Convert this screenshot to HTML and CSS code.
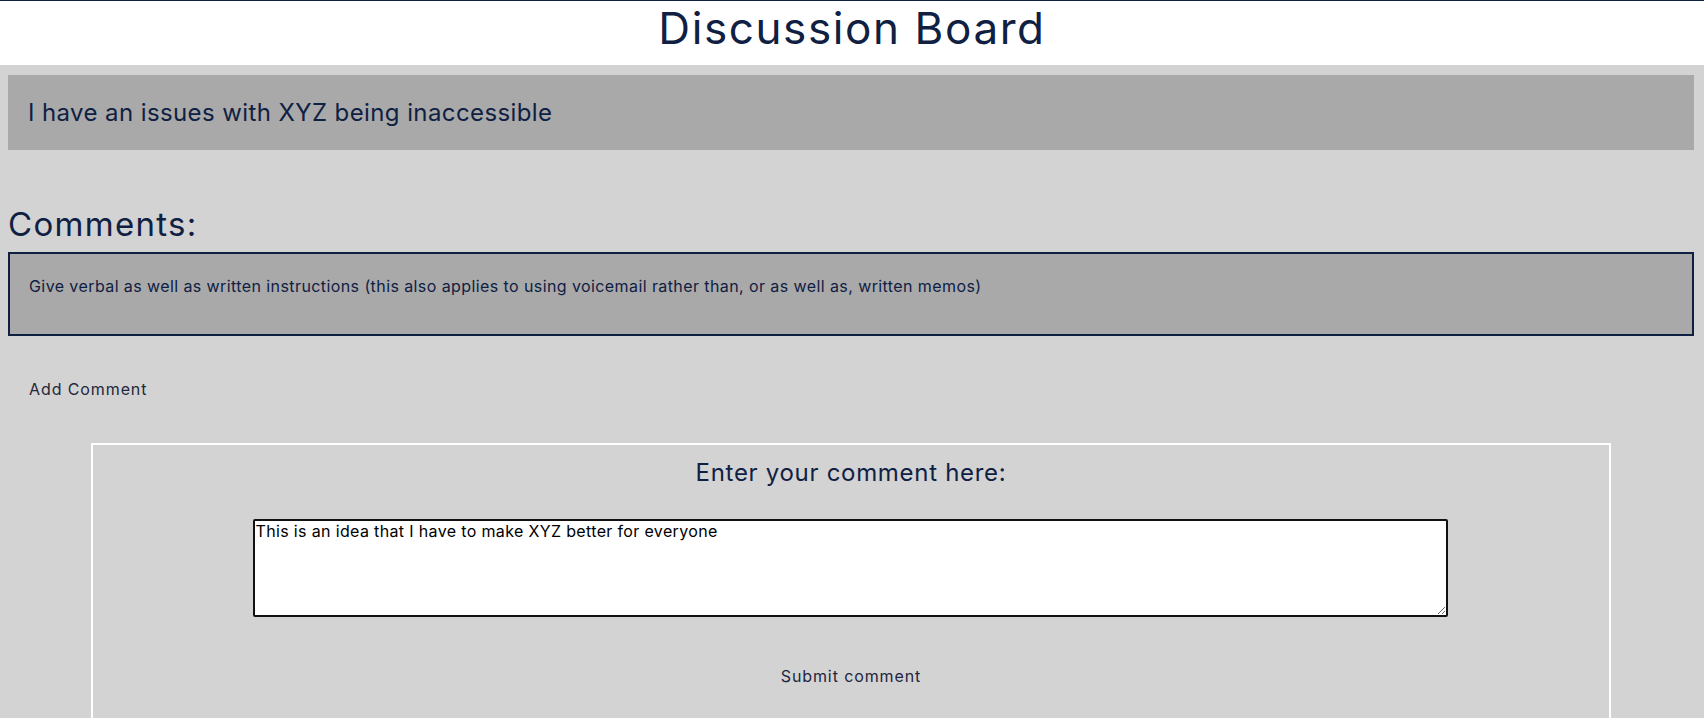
FILE: index.html
```html
<!DOCTYPE html>
<html lang="en">
<head>
<meta charset="utf-8">
<title>Discussion Board</title>
<link rel="stylesheet" href="styles.css">
</head>
<body>
<header class="site-header">
  <h1 class="site-title">Discussion Board</h1>
</header>
<main class="board">
  <section class="issue">I have an issues with XYZ being inaccessible</section>
  <h2 class="comments-title">Comments:</h2>
  <div class="comment">Give verbal as well as written instructions (this also applies to using voicemail rather than, or as well as, written memos)</div>
  <div class="add-row"><button class="link-btn" type="button">Add Comment</button></div>
  <form class="comment-form">
    <label class="form-label" for="c">Enter your comment here:</label>
    <textarea id="c" class="form-text">This is an idea that I have to make XYZ better for everyone</textarea>
    <button class="link-btn submit-btn" type="button">Submit comment</button>
  </form>
</main>
</body>
</html>
```
FILE: styles.css
```css
html, body {
  margin: 0;
  padding: 0;
}
body {
  background: #d3d3d3;
  font-family: Inter, "Open Sans", sans-serif;
  color: #0f2043;
  min-height: 718px;
}
.site-header {
  background: #ffffff;
  border-top: 1px solid #0f2043;
  height: 65px;
  box-sizing: border-box;
  padding-top: 3px;
}
.site-title {
  margin: 0;
  text-align: center;
  font-weight: 400;
  font-size: 44px;
  line-height: 48px;
  letter-spacing: 1.6px;
  color: #0f2043;
}
.board {
  padding: 0 10px 0 8px;
}
.issue {
  margin-top: 10px;
  height: 75px;
  line-height: 75px;
  background: #a9a9a9;
  padding-left: 20px;
  font-size: 24px;
  letter-spacing: 0.4px;
}
.comments-title {
  margin: 54px 0 8px;
  font-weight: 400;
  font-size: 33px;
  line-height: 40px;
  letter-spacing: 1.3px;
}
.comment {
  height: 84px;
  box-sizing: border-box;
  border: 2px solid #0f2043;
  background: #a9a9a9;
  padding: 20px 19px 0;
  font-size: 16px;
  line-height: 24px;
  letter-spacing: 0.41px;
}
.add-row {
  margin-top: 41px;
  padding-left: 21px;
}
.link-btn {
  background: transparent;
  border: 0;
  padding: 0;
  font-family: Inter, "Open Sans", sans-serif;
  font-size: 16px;
  line-height: 24px;
  letter-spacing: 0.9px;
  color: #23283a;
  cursor: pointer;
}
.comment-form {
  width: 89.9%;
  margin: 42px auto 0;
  border: 2px solid #ffffff;
  border-bottom: 0;
  padding-top: 13px;
  height: 300px;
  display: flex;
  flex-direction: column;
  align-items: center;
}
.form-label {
  font-size: 24px;
  line-height: 30px;
  letter-spacing: 0.7px;
  color: #0f2043;
}
.form-text {
  margin-top: 31px;
  width: 1195px;
  height: 98px;
  box-sizing: border-box;
  border: 2px solid #111111;
  border-radius: 2px;
  background: #ffffff;
  padding: 0;
  font-family: Inter, "Open Sans", sans-serif;
  font-size: 16px;
  letter-spacing: 0.35px;
  color: #000000;
  resize: both;
}
.submit-btn {
  margin-top: 47px;
  color: #1e2540;
}
```
